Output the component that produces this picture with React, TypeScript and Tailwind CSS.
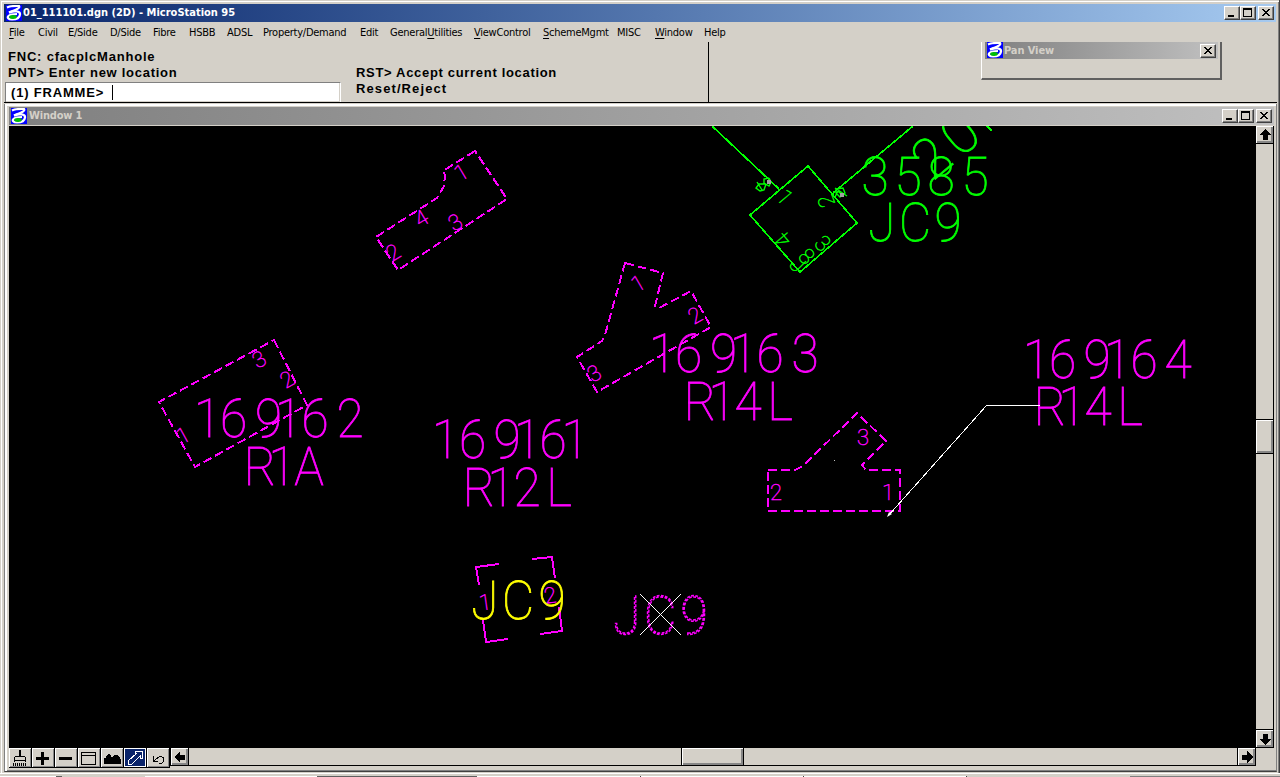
import React from "react";

type Tone = "min" | "max" | "close";

function LogoIcon() {
  return (
    <svg width="16" height="16" viewBox="0 0 16 16" className="shrink-0">
      <rect width="16" height="16" fill="#0000ff" />
      <path d="M1 2.5C4 1 8 .8 13 1C14.500 3 10 5 3 7.500" fill="none" stroke="#fff" strokeWidth="2.200" />
      <path d="M3 7.500C8 5.500 14.500 6 14 9.500C13.500 13.500 10 14.500 6 14.500C2 14.500 1 12.500 2.500 11C4 9.500 8 9 11 9" fill="none" stroke="#fff" strokeWidth="2.200" />
      <ellipse cx="7" cy="12" rx="3.800" ry="1.900" fill="#00c000" />
    </svg>
  );
}

function WinButton({ kind }: { kind: Tone }) {
  return (
    <button className="flex h-[14px] w-4 shrink-0 items-center justify-center border border-t-white border-l-white border-r-[#404040] border-b-[#404040] bg-[#d4d0c8] shadow-[inset_-1px_-1px_0_#808080]">
      <svg width="14" height="12" viewBox="0 0 14 12" shapeRendering="crispEdges">
        {kind === "min" && <path d="M3 8h6v2H3z" />}
        {kind === "max" && <path d="M2 1h9v9H2zM3 3v6h7V3z" fillRule="evenodd" />}
        {kind === "close" && (
          <path d="M3 2h2v1h1v1h2v-1h1v-1h2v1h-1v1h-1v1h-1v1h1v1h1v1h1v1h-2v-1h-1v-1h-2v1h-1v1H3V8h1V7h1V6h1V5H5V4H4V3H3z" />
        )}
      </svg>
    </button>
  );
}

const MENU: [string, string, string, string][] = [
  ["", "F", "ile", "w-[29px]"],
  ["Civil", "", "", "w-[30px]"],
  ["E/Side", "", "", "w-[42px]"],
  ["D/Side", "", "", "w-[43px]"],
  ["Fibre", "", "", "w-[36px]"],
  ["HSBB", "", "", "w-[38px]"],
  ["ADSL", "", "", "w-[36px]"],
  ["Property/Demand", "", "", "w-[97px]"],
  ["Edit", "", "", "w-[30px]"],
  ["General", "U", "tilities", "w-[84px]"],
  ["", "V", "iewControl", "w-[69px]"],
  ["", "S", "chemeMgmt", "w-[74px]"],
  ["MISC", "", "", "w-[38px]"],
  ["", "W", "indow", "w-[49px]"],
  ["Help", "", "", "w-[30px]"],
];

/* Drawing label: every character is centred on its own x position. */
function Label({ text, xs, y, fill = "#ff00ff", dashed = false }: { text: string; xs: number[]; y: number; fill?: string; dashed?: boolean }) {
  const sx = 0.92;
  return (
    <text
      x={xs.map((x) => x / sx).join(" ")}
      y={y}
      transform={`scale(${sx} 1)`}
      textAnchor="middle"
      fontSize="54"
      fontWeight="100"
      fill={dashed ? "none" : fill}
      stroke={fill}
      strokeWidth={dashed ? 1.5 : 0.8}
      strokeDasharray={dashed ? "3 1.5" : undefined}
    >
      {text}
    </text>
  );
}

function Digit({ c, x, y, r = 0, fill = "#ff00ff" }: { c: string; x: number; y: number; r?: number; fill?: string }) {
  return (
    <text transform={`translate(${x} ${y}) rotate(${r})`} y="8" textAnchor="middle" fontSize="22" fontWeight="100" fill={fill} stroke={fill} strokeWidth="0.45">
      {c}
    </text>
  );
}

function Drawing() {
  return (
    <svg width="1247" height="621" viewBox="9 126 1247 621" className="block bg-black font-['Roboto',sans-serif]">
      <g fill="none" stroke="#ff00ff" strokeWidth="2" strokeDasharray="9 4" shapeRendering="crispEdges">
        <path d="M475 151L443 171L445 175L444 186L437 198L376 237L398 270L507 199Z" />
        <path d="M625 263L663 273L655 306L659 308L691 291L711 327L597 392L577 357L602 341L605 335L625 263Z" />
        <path d="M274 340L307 405L195 467L159 402Z" />
        <path d="M768 470H795L803 466L857 413L886 441L862 465L866 470H900V511H768Z" />
      </g>
      <path d="M499 564L476 567L479 585M532 559L552 557L555 578M559 607L562 631L540 634M483 620L486 642L508 639" fill="none" stroke="#ff00ff" strokeWidth="2" shapeRendering="crispEdges" />

      <Digit c="1" x={461} y={172} r={-31} />
      <Digit c="4" x={421} y={218} r={-31} />
      <Digit c="3" x={455} y={222} r={-31} />
      <Digit c="2" x={393} y={252} r={-31} />
      <Digit c="1" x={638} y={283} r={-30} />
      <Digit c="2" x={695} y={315} r={-30} />
      <Digit c="3" x={594} y={373} r={-30} />
      <Digit c="3" x={259} y={359} r={-29} />
      <Digit c="2" x={287} y={379} r={-29} />
      <Digit c="1" x={183} y={435} r={-29} />
      <Digit c="3" x={863} y={437} />
      <Digit c="2" x={776} y={492} />
      <Digit c="1" x={888} y={492} />
      <Digit c="1" x={485} y={602} r={-8} />
      <Digit c="2" x={550} y={595} r={-8} />

      <Label text="169162" xs={[207.500, 233.5, 268.500, 288.500, 315, 350]} y={437} />
      <Label text="R1A" xs={[260, 282, 309]} y={485} />
      <Label text="169161" xs={[445.500, 472.500, 507, 527.500, 553, 575]} y={458} />
      <Label text="R12L" xs={[479, 501, 527, 559]} y={506} />
      <Label text="169163" xs={[662.500, 688.500, 723.500, 743.500, 770, 805]} y={372} />
      <Label text="R14L" xs={[700, 722, 748, 780]} y={420} />
      <Label text="169164" xs={[1036.500, 1062.500, 1097, 1117.500, 1144, 1178]} y={378} />
      <Label text="R14L" xs={[1050, 1072, 1098, 1130]} y={425} />
      <Label text="JC9" xs={[485, 518, 552]} y={619} fill="#ffff00" />
      <Label text="JC9" xs={[627, 660, 694]} y={634} dashed />

      <g fill="none" stroke="#00ff00" strokeWidth="1.7" shapeRendering="crispEdges">
        <path d="M712 126L779 189M913 126L833 193M808 166L857 223L800 272L750 215ZM987 126L992 131" />
      </g>
      <g fill="none" stroke="#00ff00" strokeWidth="1.4">
        <path d="M769 178L764 179L764 183L769 186L771 182L769 178M765 184L759 184L756 188L760 191L764 190L766 184M757 182L762 190" />
        <path d="M836 189L843 188L845 193L840 197L836 193ZM835 188L847 196M835 197L838 191L843 196" />
      </g>
      <rect x="767" y="180" width="4" height="4" fill="#a0a0a0" />
      <rect x="840" y="193" width="4" height="4" fill="#a0a0a0" />
      <Digit c="1" x={785} y={197} r={50} fill="#00ff00" />
      <Digit c="2" x={826} y={201} r={-110} fill="#00ff00" />
      <Digit c="4" x={783} y={240} r={-130} fill="#00ff00" />
      <Digit c="3" x={823} y={243} r={45} fill="#00ff00" />
      <Digit c="8" x={807} y={256} r={45} fill="#00ff00" />
      <Digit c="J" x={798} y={264} r={45} fill="#00ff00" />
      <Label text="3585" xs={[875, 908, 941, 975]} y={195} fill="#00ff00" />
      <Label text="JC9" xs={[882, 915, 948]} y={241} fill="#00ff00" />
      <text transform="translate(931 157) rotate(-40)" x="0 37" y="20" textAnchor="middle" fontSize="56" fontWeight="100" fill="#00ff00" stroke="#00ff00" strokeWidth=".8">20</text>

      <path d="M1040 405.500H986.500L888 516" fill="none" stroke="#fff" strokeWidth="1" shapeRendering="crispEdges" />
      <path d="M887 517L889 512L892 514Z" fill="#fff" />
      <path d="M640 594L681 635M681 594L640 635" stroke="#fff" strokeWidth="1" shapeRendering="crispEdges" />
      <rect x="834" y="460" width="1" height="1" fill="#c0c0c0" />
    </svg>
  );
}

function ArrowIcon({ turn }: { turn: string }) {
  return (
    <svg width="12" height="12" viewBox="0 0 12 12" shapeRendering="crispEdges" className={turn}>
      <path d="M6 0L12 6H8.500V11H3.500V6H0Z" />
    </svg>
  );
}

const RAISED = "flex shrink-0 items-center justify-center bg-[#d4d0c8] border-t border-l border-white pr-px pb-px shadow-[inset_-2px_-2px_0_#868686]";

function Tool({ active = false, children }: { active?: boolean; children: React.ReactNode }) {
  return (
    <div className="h-5 w-[23px] shrink-0 border-r border-b border-black">
      <div
        className={
          active
            ? "flex h-full w-full items-center justify-center border border-white bg-[#0a246a]"
            : "flex h-full w-full items-center justify-center border-t border-l border-white bg-[#d4d0c8] pr-px shadow-[inset_-1px_-1px_0_#868686]"
        }
      >
        <svg width="18" height="16" viewBox="0 0 18 16" shapeRendering="crispEdges" fill="none" stroke="#000" strokeWidth="1" className="shrink-0">
          {children}
        </svg>
      </div>
    </div>
  );
}

export default function App() {
  return (
    <div className="flex h-[777px] w-[1280px] flex-col overflow-hidden bg-[#d4d0c8] font-['DejaVu_Sans_Condensed','DejaVu_Sans',sans-serif] text-[11px] text-black">
      <div className="flex h-[773px] shrink-0 flex-col border-r border-r-[#404040] shadow-[inset_1px_1px_0_#d4d0c8,inset_2px_2px_0_#fff,inset_-1px_0_0_#808080] pl-1 pt-1 pr-[2px]">
        <div className="mr-px flex h-[18px] shrink-0 items-center bg-linear-to-r from-[#0a246a] to-[#a6caf0] pr-[2px] pl-[2px]">
          <LogoIcon />
          <span className="ml-px pt-px text-[11px] font-bold tracking-[0px] whitespace-pre text-white">01_111101.dgn (2D) - MicroStation 95</span>
          <div className="ml-auto flex">
            <WinButton kind="min" />
            <WinButton kind="max" />
            <div className="ml-[2px] flex"><WinButton kind="close" /></div>
          </div>
        </div>

        <nav className="flex h-5 shrink-0 items-center pt-[2px] pl-[5px] text-[11px] tracking-[-0.25px]">
          {MENU.map(([a, u, b, w]) => (
            <div key={a + u + b} className={`${w} shrink-0 whitespace-nowrap`}>
              {a}<span className="underline decoration-1 underline-offset-2">{u}</span>{b}
            </div>
          ))}
        </nav>

        <section className="flex h-[61px] shrink-0 border-b border-black font-['Liberation_Sans',sans-serif] text-[13px] leading-4 font-bold">
          <div className="flex w-[337px] shrink-0 flex-col pt-[7px]">
            <div className="pl-1 tracking-[0.8px]">FNC: cfacplcManhole</div>
            <div className="pl-1 tracking-[0.72px]">PNT&gt; Enter new location</div>
            <div className="mt-[1px] ml-[1px] flex h-5 items-center border-t border-l border-t-[#808080] border-l-[#808080] border-r border-r-white bg-white pl-[5px] shadow-[inset_-1px_-1px_0_#d4d0c8]">
              <span className="tracking-[0.82px]">(1) FRAMME&gt;</span>
              <span className="ml-2 h-[15px] w-px bg-black" />
            </div>
          </div>
          <div className="w-[368px] shrink-0 border-r border-black pt-[23px] pl-[15px]">
            <div className="tracking-[0.68px]">RST&gt; Accept current location</div>
            <div className="tracking-[1.100px]">Reset/Reject</div>
          </div>
          <div className="ml-[272px] h-[38px] w-[241px] border-r-2 border-b-2 border-l border-l-white border-r-[#606060] border-b-[#606060] pr-[2px] pl-[3px] font-['DejaVu_Sans_Condensed','DejaVu_Sans',sans-serif] text-[11px]">
            <div className="flex h-[17px] items-center overflow-hidden bg-linear-to-r from-[#808080] to-[#c0c0c0] px-[2px]">
              <div className="-mt-px flex"><LogoIcon /></div>
              <span className="ml-px tracking-[-0.1px] text-[#d4d0c8]">Pan View</span>
              <div className="ml-auto flex"><WinButton kind="close" /></div>
            </div>
          </div>
        </section>

        <section className="mt-px flex h-[668px] shrink-0 flex-col border-l border-r border-b border-l-[#808080] border-r-[#808080] border-b-[#404040] pt-[3px] pr-[2px] pl-1 shadow-[inset_2px_2px_0_#fff,inset_0_-1px_0_#808080]">
          <div className="flex h-[18px] shrink-0 items-center bg-linear-to-r from-[#808080] to-[#c0c0c0] px-[2px]">
            <LogoIcon />
            <span className="ml-[2px] pt-px font-bold tracking-[-0.2px] text-[#d4d0c8]">Window 1</span>
            <div className="ml-auto flex">
              <WinButton kind="min" />
              <WinButton kind="max" />
              <div className="ml-[2px] flex"><WinButton kind="close" /></div>
            </div>
          </div>
          <div className="mt-px flex h-[621px] shrink-0">
            <Drawing />
            <div className="flex h-[622px] w-[18px] shrink-0 flex-col border-r border-b border-black">
              <div className={`${RAISED} h-[17px]`}><ArrowIcon turn="" /></div>
              <div className="h-[276px] shrink-0 border-t border-black" />
              <div className="h-[35px] shrink-0 border-y border-black"><div className={`${RAISED} h-full`} /></div>
              <div className="flex-1" />
              <div className="h-[18px] shrink-0 border-t border-black"><div className={`${RAISED} h-full`}><ArrowIcon turn="rotate-180" /></div></div>
            </div>
          </div>
          <div className="flex h-[21px] w-[1247px] shrink-0 items-start border-t border-black">
            <Tool>
              <path d="M8.500 0V6" strokeWidth="2" /><path d="M3.500 12V7.500L5 6.500H13L14.500 7.500V12M3 10.500H15" />
              <path d="M2 14H15" strokeWidth="3" strokeDasharray="1 1" />
            </Tool>
            <Tool><path d="M2 8H15M8.500 1.500V14.500" strokeWidth="3" /></Tool>
            <Tool><path d="M2 8H15" strokeWidth="3" /></Tool>
            <Tool><path d="M1.500 2.500H15.500V14.500H1.500ZM2 5.500H15" /></Tool>
            <Tool><path d="M1 13V9L3 8L6 4L8 7L10 8L12 5H14L17 9V13Z" fill="#000" /></Tool>
            <Tool active><path d="M2 11L11 3H9V1H16V8H14V6L5 15L2 14Z" stroke="#fff" /></Tool>
            <Tool>
              <path d="M4.500 6V11.500H9" /><path d="M5 11L9 7.500C12 5.500 15 7 15 10C15 12 13 14 10 14" />
            </Tool>
            <div className="flex h-[18px] flex-1 border-b border-l border-black">
              <div className={`${RAISED} w-[17px]`}><ArrowIcon turn="-rotate-90" /></div>
              <div className="w-[493px] shrink-0 border-l border-black" />
              <div className="w-[63px] shrink-0 border-x border-black"><div className={`${RAISED} h-full`} /></div>
              <div className="flex-1" />
              <div className="w-[19px] shrink-0 border-x border-black"><div className={`${RAISED} h-full`}><ArrowIcon turn="rotate-90" /></div></div>
            </div>
          </div>
        </section>
      </div>
      <div className="h-px shrink-0 bg-white" />
      <div className="h-[2px] shrink-0" />
      <div className="flex h-px shrink-0">
        <div className="w-[56px] bg-white" /><div className="w-[6px] bg-[#606060]" />
        <div className="w-[83px]" /><div className="w-[172px] bg-white" />
        <div className="w-[160px] bg-[#606060]" /><div className="w-[163px] bg-white" />
        <div className="w-px bg-[#404040]" /><div className="w-[162px] bg-white" />
        <div className="w-px bg-[#404040]" /><div className="w-[162px] bg-white" />
        <div className="w-px bg-[#404040]" /><div className="w-[163px]" />
        <div className="flex-1 bg-[#808080]" />
      </div>
    </div>
  );
}
